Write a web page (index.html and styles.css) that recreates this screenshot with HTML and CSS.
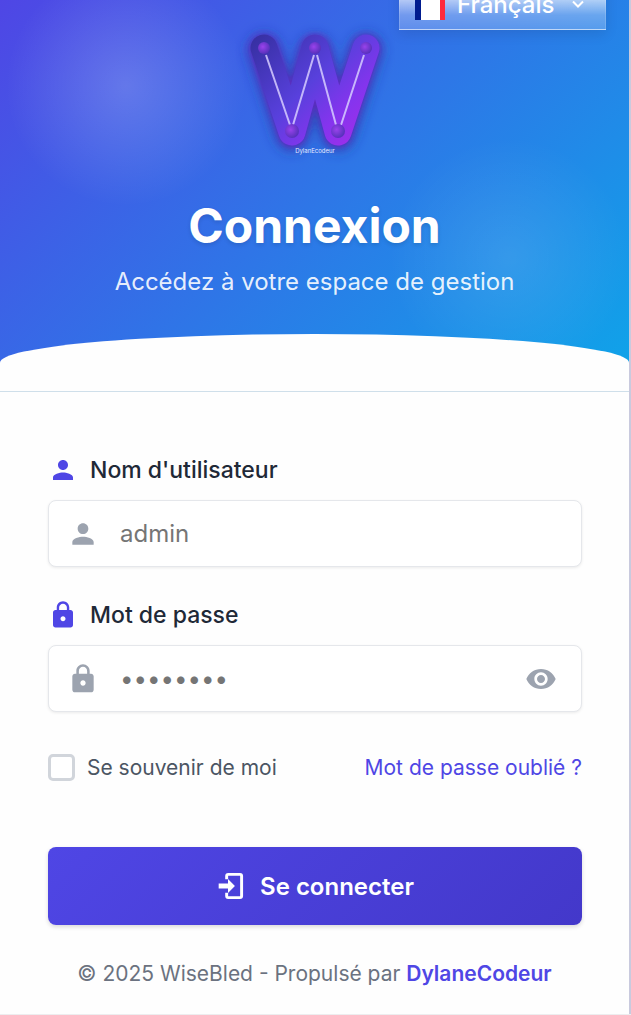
FILE: index.html
```html
<!DOCTYPE html>
<html lang="fr">
<head>
    <meta charset="UTF-8">
    <meta name="viewport" content="width=device-width, initial-scale=1.0">
    <title>Connexion - WiseBled</title>
    <link rel="stylesheet" href="styles.css">
</head>
<body>
    <main class="login-card">
        <!-- En-tête -->
        <header class="login-header">
            <div class="language-selector">
                <svg class="flag" viewBox="0 0 30 32" aria-hidden="true">
                    <rect width="30" height="32" fill="#fff"/>
                    <rect width="6" height="32" fill="#001b8f"/>
                    <rect x="25" width="5" height="32" fill="#ff2a3c"/>
                </svg>
                <select class="language-select" aria-label="Langue">
                    <option selected>Français</option>
                    <option>English</option>
                </select>
                <svg class="chevron" viewBox="0 0 24 24" aria-hidden="true">
                    <path d="M7 9.5l5 5 5-5" fill="none" stroke="#fff" stroke-width="2"/>
                </svg>
            </div>

            <svg class="logo" viewBox="0 0 160 160" role="img" aria-label="WiseBled">
                <defs>
                    <linearGradient id="wFill" gradientUnits="userSpaceOnUse" x1="20" y1="30" x2="120" y2="130">
                        <stop offset="0" stop-color="#3730a3"/>
                        <stop offset="0.5" stop-color="#5840dc"/>
                        <stop offset="0.8" stop-color="#8534ee"/>
                        <stop offset="1" stop-color="#9b2fea"/>
                    </linearGradient>
                    <radialGradient id="dot" cx="0.4" cy="0.4" r="0.65">
                        <stop offset="0" stop-color="#9a42ec"/>
                        <stop offset="1" stop-color="#5230b8"/>
                    </radialGradient>
                    <filter id="glow" filterUnits="userSpaceOnUse" x="0" y="0" width="160" height="160">
                        <feGaussianBlur stdDeviation="7"/>
                    </filter>
                    <filter id="edge" filterUnits="userSpaceOnUse" x="0" y="0" width="160" height="160">
                        <feGaussianBlur stdDeviation="3"/>
                    </filter>
                </defs>
                <g fill="none" stroke-linecap="round" stroke-linejoin="round">
                    <path d="M29 42L57 127L80 44L103 127L131 42" stroke="#26309a" stroke-opacity="0.6" stroke-width="32" filter="url(#glow)"/>
                    <path d="M29 41L57 125L80 41L103 125L131 41" stroke="#6425c0" stroke-opacity="0.85" stroke-width="29" filter="url(#edge)"/>
                    <path d="M29 40L57 124L80 40L103 124L131 40" stroke="url(#wFill)" stroke-width="27"/>
                </g>
                <path d="M31 47L55 117M79 47L58 117M82 47L101 117M129 47L106 117" fill="none" stroke="#d6ccff" stroke-opacity="0.85" stroke-width="2"/>
                <g fill="url(#dot)">
                    <circle cx="29" cy="40" r="6"/>
                    <circle cx="80" cy="40" r="6"/>
                    <circle cx="131" cy="40" r="6"/>
                    <circle cx="57" cy="123" r="7"/>
                    <circle cx="103" cy="123" r="7"/>
                </g>
                <text class="logo-text" x="80" y="145" text-anchor="middle">DylanEcodeur</text>
            </svg>

            <h1 class="login-title">Connexion</h1>
            <p class="login-subtitle">Accédez à votre espace de gestion</p>
            <div class="wave"></div>
        </header>

        <!-- Formulaire -->
        <form class="login-form">
            <div class="form-group">
                <label class="form-label" for="username">
                    <svg class="icon" viewBox="0 0 24 24" aria-hidden="true"><path d="M12 12c2.21 0 4-1.79 4-4s-1.79-4-4-4-4 1.79-4 4 1.79 4 4 4zm0 2c-2.67 0-8 1.34-8 4v2h16v-2c0-2.66-5.33-4-8-4z"/></svg>
                    Nom d'utilisateur
                </label>
                <div class="input-box">
                    <svg class="icon" viewBox="0 0 24 24" aria-hidden="true"><path d="M12 12c2.21 0 4-1.79 4-4s-1.79-4-4-4-4 1.79-4 4 1.79 4 4 4zm0 2c-2.67 0-8 1.34-8 4v2h16v-2c0-2.66-5.33-4-8-4z"/></svg>
                    <input class="form-input" type="text" id="username" placeholder="admin">
                </div>
            </div>

            <div class="form-group">
                <label class="form-label" for="password">
                    <svg class="icon" viewBox="0 0 24 24" aria-hidden="true"><path d="M18 8h-1V6c0-2.76-2.24-5-5-5S7 3.24 7 6v2H6c-1.1 0-2 .9-2 2v10c0 1.1.9 2 2 2h12c1.1 0 2-.9 2-2V10c0-1.1-.9-2-2-2zm-6 9c-1.1 0-2-.9-2-2s.9-2 2-2 2 .9 2 2-.9 2-2 2zm3.1-9H8.900V6c0-1.71 1.39-3.1 3.1-3.1s3.1 1.39 3.1 3.1v2z"/></svg>
                    Mot de passe
                </label>
                <div class="input-box">
                    <svg class="icon" viewBox="0 0 24 24" aria-hidden="true"><path d="M18 8h-1V6c0-2.76-2.24-5-5-5S7 3.24 7 6v2H6c-1.1 0-2 .9-2 2v10c0 1.1.9 2 2 2h12c1.1 0 2-.9 2-2V10c0-1.1-.9-2-2-2zm-6 9c-1.1 0-2-.9-2-2s.9-2 2-2 2 .9 2 2-.9 2-2 2zm3.1-9H8.900V6c0-1.71 1.39-3.1 3.1-3.1s3.1 1.39 3.1 3.1v2z"/></svg>
                    <input class="form-input" type="password" id="password" placeholder="••••••••">
                    <button class="toggle-password" type="button" aria-label="Afficher le mot de passe">
                        <svg class="icon" viewBox="0 0 24 24" aria-hidden="true"><path d="M12 4.5C7 4.5 2.73 7.61 1 12c1.73 4.39 6 7.5 11 7.5s9.27-3.11 11-7.5c-1.73-4.39-6-7.5-11-7.5zM12 17c-2.76 0-5-2.24-5-5s2.24-5 5-5 5 2.24 5 5-2.24 5-5 5zm0-8c-1.66 0-3 1.34-3 3s1.34 3 3 3 3-1.34 3-3-1.34-3-3-3z"/></svg>
                    </button>
                </div>
            </div>

            <div class="form-options">
                <label class="remember" for="remember">
                    <input class="checkbox" type="checkbox" id="remember">
                    Se souvenir de moi
                </label>
                <a class="forgot" href="#">Mot de passe oublié ?</a>
            </div>

            <button class="submit-btn" type="submit">
                <svg class="icon" viewBox="0 0 24 24" aria-hidden="true">
                    <path d="M8 7V4.500A1.200 1.200 0 0 1 9.200 3.300H18A1.200 1.200 0 0 1 19.200 4.500V19.500A1.200 1.200 0 0 1 18 20.700H9.200A1.200 1.200 0 0 1 8 19.500V17" fill="none" stroke="#fff" stroke-width="2.200"/>
                    <path d="M2 10.200h7V6.800L14.200 12 9 17.200v-3.400H2z"/>
                </svg>
                Se connecter
            </button>
        </form>

        <footer class="login-footer">
            © 2025 WiseBled - Propulsé par <a class="footer-link" href="#">DylaneCodeur</a>
        </footer>
    </main>
</body>
</html>
```
FILE: styles.css
```css
* {
    box-sizing: border-box;
}

body {
    margin: 0;
    font-family: Inter, "Liberation Sans", sans-serif;
    color: #1f2937;
    background-color: #ededef;
}

.login-card {
    background-color: #fefefe;
    border-right: 2px solid #c9cade;
    overflow: hidden;
}

.icon {
    width: 32px;
    height: 32px;
    fill: currentColor;
    flex-shrink: 0;
}

/* En-tête */
.login-header {
    position: relative;
    display: flex;
    flex-direction: column;
    align-items: center;
    padding-top: 8px;
    text-align: center;
    color: #ffffff;
    border-bottom: 1px solid #cfdfea;
    background:
        radial-gradient(circle at 20% 22%, rgba(255, 255, 255, 0.18), transparent 120px),
        radial-gradient(circle at 81% 66%, rgba(255, 255, 255, 0.1), transparent 120px),
        linear-gradient(135deg, #4f46e5 0%, #0ea5e9 100%);
}

.language-selector {
    position: absolute;
    top: -22px;
    right: 23px;
    display: flex;
    align-items: center;
    width: 207px;
    height: 52px;
    padding: 0 15px;
    border: 1px solid rgba(255, 255, 255, 0.15);
    background: linear-gradient(to bottom, rgba(255, 255, 255, 0.65) 40%, rgba(255, 255, 255, 0.3) 72%, rgba(255, 255, 255, 0.22) 100%);
    box-shadow: 0 4px 12px rgba(0, 0, 0, 0.1);
}

.flag {
    width: 30px;
    height: 32px;
    flex-shrink: 0;
}

.language-select {
    flex: 1;
    min-width: 0;
    padding: 0 0 0 12px;
    border: none;
    background: none;
    color: #ffffff;
    font-family: inherit;
    font-size: 24px;
    font-weight: 500;
    appearance: none;
}

.chevron {
    width: 24px;
    height: 24px;
    flex-shrink: 0;
}

.logo {
    width: 160px;
    height: 160px;
}

.logo-text {
    font-size: 6px;
    fill: #e6e9ff;
}

.login-title {
    margin: 28px 0 0;
    font-size: 48px;
    line-height: 60px;
    font-weight: 700;
    text-shadow: 0 2px 4px rgba(0, 0, 0, 0.12);
}

.login-subtitle {
    margin: 8px 0 34px;
    font-size: 24px;
    line-height: 36px;
    color: rgba(255, 255, 255, 0.9);
}

.wave {
    width: 100%;
    height: 57px;
    background-color: #fefefe;
    border-radius: 50% 50% 0 0;
}

/* Formulaire */
.login-form {
    padding: 60px 47px 0 48px;
}

.form-group {
    margin-bottom: 30px;
}

.form-label {
    display: flex;
    align-items: center;
    gap: 12px;
    height: 36px;
    margin-bottom: 12px;
    font-size: 23px;
    font-weight: 500;
}

.form-label .icon {
    width: 30px;
    color: #4f46e5;
}

.input-box {
    display: flex;
    align-items: center;
    height: 67px;
    padding: 0 24px 0 18px;
    border: 1px solid #e5e7eb;
    border-radius: 8px;
    background-color: #ffffff;
    color: #9ca3af;
    box-shadow: 0 1px 3px rgba(0, 0, 0, 0.08);
}

.form-input {
    flex: 1;
    min-width: 0;
    padding: 0 0 0 21px;
    border: none;
    outline: none;
    background: none;
    font-family: inherit;
    font-size: 24px;
}

.form-input::placeholder {
    color: #757575;
}

.toggle-password {
    display: flex;
    padding: 0;
    border: none;
    background: none;
    color: #9ca3af;
}

.form-options {
    display: flex;
    justify-content: space-between;
    align-items: center;
    margin: 42px 0 66px;
    font-size: 21px;
    line-height: 27px;
}

.remember {
    display: flex;
    align-items: center;
    gap: 12px;
    color: #4b5563;
}

.checkbox {
    width: 27px;
    height: 27px;
    margin: 0;
    border: 3px solid #d1d5db;
    border-radius: 5px;
    background-color: #ffffff;
    appearance: none;
}

.checkbox:checked {
    background-color: #4f46e5;
}

.forgot,
.footer-link {
    color: #4f46e5;
    text-decoration: none;
}

.submit-btn {
    display: flex;
    justify-content: center;
    align-items: center;
    gap: 12px;
    width: 100%;
    height: 78px;
    border: none;
    border-radius: 8px;
    color: #ffffff;
    background: linear-gradient(135deg, #4f46e5 0%, #4338ca 100%);
    box-shadow: 0 2px 4px rgba(0, 0, 0, 0.15);
    font-family: inherit;
    font-size: 24px;
    font-weight: 600;
}

/* Pied de page */
.login-footer {
    padding: 33px 24px 24px;
    text-align: center;
    font-size: 21px;
    line-height: 32px;
    color: #6b7280;
}

.footer-link {
    font-weight: 600;
}
```
